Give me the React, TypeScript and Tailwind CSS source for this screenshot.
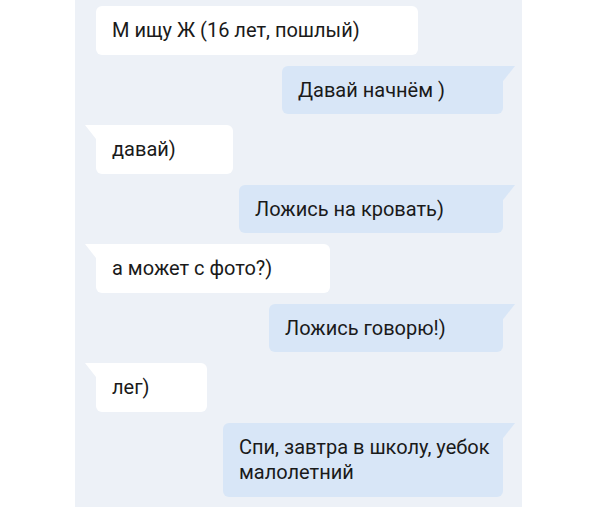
const messages = [
  { out: false, text: "М ищу Ж (16 лет, пошлый)", w: "w-[322px]", tail: false },
  { out: true, text: "Давай начнём )", w: "w-[221px]", tail: true },
  { out: false, text: "давай)", w: "w-[137px]", tail: true },
  { out: true, text: "Ложись на кровать)", w: "w-[264px]", tail: true },
  { out: false, text: "а может с фото?)", w: "w-[234px]", tail: true },
  { out: true, text: "Ложись говорю!)", w: "w-[234px]", tail: true },
  { out: false, text: "лег)", w: "w-[111px]", tail: true },
  { out: true, text: "Спи, завтра в школу, уебок малолетний", w: "w-[280px]", tail: true },
];

function Bubble({ out, text, w, tail }: { out: boolean; text: string; w: string; tail: boolean }) {
  const fill = out ? "#d8e6f7" : "#ffffff";
  return (
    <div
      className={`relative ${w} rounded-md py-3 pl-4 pr-2 text-[20px] leading-[24.5px] text-[#1a1a1a] ${
        out ? "self-end bg-[#d8e6f7]" : "self-start bg-white"
      } ${tail ? (out ? "rounded-tr-none" : "rounded-tl-none") : ""}`}
    >
      {tail && (
        <svg
          className={`absolute top-0 ${out ? "-right-[12px]" : "-left-[11px]"}`}
          width="12"
          height="15"
          viewBox="0 0 12 15"
        >
          {out ? (
            <path d="M0 0 H12 L1 14 L0 15 Z" fill={fill} />
          ) : (
            <path d="M12 0 H0 L11 14 L12 15 Z" fill={fill} />
          )}
        </svg>
      )}
      <p className={out && text.length > 30 ? "leading-[25px]" : ""}>{text}</p>
    </div>
  );
}

export default function App() {
  return (
    <div className="h-[507px] w-[600px] overflow-hidden bg-white font-['Roboto',sans-serif]">
      <div className="ml-[75px] flex h-full w-[447px] flex-col gap-[11px] bg-[#edf1f7] pl-[21px] pr-[19px] pt-[6px]">
        {messages.map((m, i) => (
          <Bubble key={i} {...m} />
        ))}
      </div>
    </div>
  );
}
